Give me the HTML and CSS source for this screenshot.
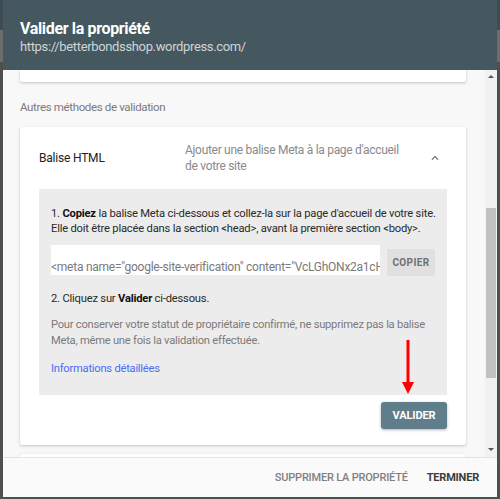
FILE: index.html
```html
<!DOCTYPE html>
<html lang="fr">
<head>
  <meta charset="UTF-8" />
  <title>Valider la propriété</title>
  <link rel="stylesheet" href="styles.css">
</head>
<body>

<div class="backdrop">
  <div class="dialog">
    <div class="dialog-header">
      <div class="dialog-title">Valider la propriété</div>
      <div class="dialog-url">https://betterbondsshop.wordpress.com/</div>
    </div>

    <div class="dialog-body">
      <div class="content">
        <div class="card card-stub"></div>

        <div class="section-label">Autres méthodes de validation</div>

        <div class="card method">
          <div class="method-head">
            <div class="method-name">Balise HTML</div>
            <div class="method-desc">Ajouter une balise Meta à la page d'accueil de votre site</div>
            <svg class="chevron" width="14" height="14" viewBox="0 0 24 24"><path d="M7.41 15.41L12 10.83l4.59 4.58L18 14l-6-6-6 6z" fill="#616161"/></svg>
          </div>

          <div class="steps">
            <p class="step">1. <b>Copiez</b> la balise Meta ci-dessous et collez-la sur la page d'accueil de votre site. Elle doit être placée dans la section &lt;head&gt;, avant la première section &lt;body&gt;.</p>
            <div class="copy-row">
              <div class="meta-field">&lt;meta name="google-site-verification" content="VcLGhONx2a1cHwq8Jd3kZ" /&gt;</div>
              <button class="btn-copy">COPIER</button>
            </div>
            <p class="step step-2">2. Cliquez sur <b>Valider</b> ci-dessous.</p>
            <p class="note">Pour conserver votre statut de propriétaire confirmé, ne supprimez pas la balise Meta, même une fois la validation effectuée.</p>
            <a class="more" href="#">Informations détaillées</a>
          </div>

          <div class="method-actions">
            <button class="btn-validate">VALIDER</button>
          </div>
        </div>

        <div class="card card-next"></div>
      </div>

      <div class="scrollbar">
        <div class="sb-arrow sb-up"></div>
        <div class="sb-thumb"></div>
        <div class="sb-arrow sb-down"></div>
      </div>
    </div>

    <div class="dialog-footer">
      <button class="btn-text">SUPPRIMER LA PROPRIÉTÉ</button>
      <button class="btn-text btn-strong">TERMINER</button>
    </div>

    <!-- annotation arrow drawn over the screenshot -->
    <svg class="red-arrow" width="16" height="56" viewBox="0 0 16 56">
      <rect x="6.5" y="0" width="3" height="44" fill="#f00"/>
      <polygon points="2,42 14,42 8,54" fill="#f00"/>
    </svg>
  </div>
</div>

</body>
</html>
```

FILE: styles.css
```css
* { box-sizing: border-box; }

body {
  margin: 0;
  font-family: Roboto, "Liberation Sans", Arial, sans-serif;
  background: #4f4f4f;
}

.backdrop {
  width: 500px;
  height: 499px;
  padding: 0 3px 2px 3px;
  background: linear-gradient(#3d4b52 0, #3d4b52 30px, #6d6d6d 30px, #6d6d6d 62px, #4f4f4f 62px);
}

.dialog {
  position: relative;
  width: 494px;
  height: 497px;
  display: flex;
  flex-direction: column;
  background: #f8f8f8;
  overflow: hidden;
}

.dialog-header {
  height: 70px;
  flex: none;
  background: #46585f;
  padding: 19px 17px 0;
}

.dialog-title {
  color: #fff;
  font-size: 16px;
  font-weight: 700;
  line-height: 20px;
  letter-spacing: -0.35px;
}

.dialog-url {
  color: #cdd5d8;
  font-size: 13px;
  line-height: 16px;
  letter-spacing: -0.35px;
}

.dialog-body {
  flex: 1;
  display: flex;
  min-height: 0;
}

.content {
  flex: 1;
  padding: 0 19px 0 17px;
  overflow: hidden;
}

.card {
  background: #fff;
  box-shadow: 0 1px 3px rgba(0, 0, 0, 0.22);
  border-radius: 2px;
}

.card-stub {
  height: 12px;
  border-radius: 0 0 2px 2px;
}

.section-label {
  margin-top: 17px;
  font-size: 11.5px;
  line-height: 16px;
  letter-spacing: -0.35px;
  color: #7a7a7a;
}

.method {
  margin-top: 12px;
  padding: 15px 19px 16px;
}

.method-head {
  display: flex;
  align-items: center;
}

.method-name {
  width: 146px;
  flex: none;
  font-size: 12px;
  letter-spacing: -0.2px;
  color: #212121;
}

.method-desc {
  width: 225px;
  font-size: 12px;
  line-height: 16px;
  letter-spacing: -0.3px;
  color: #8a8a8a;
}

.chevron {
  margin-left: auto;
  margin-right: 5px;
}

.steps {
  margin-top: 15px;
  background: #ececec;
  padding: 18px 8px 18px 12px;
}

.step {
  margin: 0;
  font-size: 11.2px;
  line-height: 14.5px;
  letter-spacing: -0.2px;
  color: #2a2a2a;
}

.step b { font-weight: 700; color: #111; }

.copy-row {
  display: flex;
  align-items: center;
  gap: 7px;
  margin: 8px 4px 0 0;
}

.meta-field {
  flex: 1;
  height: 30px;
  background: #fff;
  padding-top: 14px;
  font-size: 12px;
  line-height: 16px;
  letter-spacing: -0.25px;
  color: #7a7a7a;
  white-space: nowrap;
  overflow: hidden;
}

.btn-copy {
  width: 48px;
  height: 27px;
  margin-top: 5px;
  border: none;
  border-radius: 2px;
  background: #e0e0e0;
  color: #707070;
  font-family: inherit;
  font-size: 10px;
  font-weight: 700;
  letter-spacing: 0.4px;
  padding: 0;
}

.step-2 {
  margin-top: 15px;
  line-height: 16px;
}

.note {
  margin: 10px 0 0;
  font-size: 11.2px;
  line-height: 16px;
  letter-spacing: -0.25px;
  color: #7a7a7a;
}

.more {
  display: block;
  margin-top: 12px;
  font-size: 11.2px;
  line-height: 16px;
  letter-spacing: -0.25px;
  color: #4a6cf4;
  text-decoration: none;
}

.method-actions {
  display: flex;
  justify-content: flex-end;
  margin-top: 7px;
}

.btn-validate {
  width: 66px;
  height: 27px;
  border: none;
  border-radius: 3px;
  background: #607d8b;
  color: #fff;
  font-family: inherit;
  font-size: 11px;
  font-weight: 700;
  letter-spacing: -0.1px;
  box-shadow: 0 1px 3px rgba(0, 0, 0, 0.3);
  padding: 0;
}

.card-next {
  margin-top: 9px;
  height: 40px;
}

.scrollbar {
  width: 12px;
  flex: none;
  background: #f1f1f1;
  display: flex;
  flex-direction: column;
  align-items: center;
}

.sb-arrow {
  width: 0;
  height: 0;
  border-left: 3px solid transparent;
  border-right: 3px solid transparent;
}

.sb-up {
  margin-top: 5px;
  border-bottom: 3px solid #555;
}

.sb-thumb {
  width: 10px;
  height: 170px;
  margin-top: 130px;
  background: #c1c1c1;
}

.sb-down {
  margin-top: auto;
  margin-bottom: 6px;
  border-top: 3px solid #555;
}

.dialog-footer {
  height: 40px;
  flex: none;
  background: #fafafa;
  border-top: 1px solid #e4e4e4;
  display: flex;
  justify-content: flex-end;
  align-items: center;
  gap: 19px;
  padding-right: 18px;
}

.btn-text {
  border: none;
  background: none;
  padding: 0;
  font-family: inherit;
  font-size: 11px;
  font-weight: 500;
  letter-spacing: -0.2px;
  color: #808080;
}

.btn-strong {
  color: #3c3c3c;
  font-weight: 700;
}

.red-arrow {
  position: absolute;
  left: 397px;
  top: 340px;
}
```
